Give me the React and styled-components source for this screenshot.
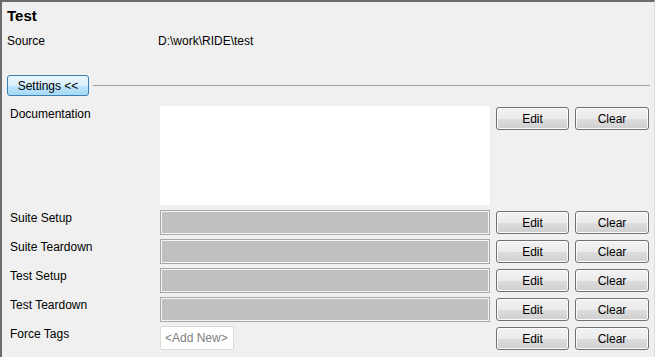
import React from "react";
import styled, { createGlobalStyle } from "styled-components";

const GlobalStyle = createGlobalStyle`
  html, body {
    margin: 0;
    padding: 0;
    background: #f0f0f0;
    font-family: "Liberation Sans", Arial, sans-serif;
    font-size: 12px;
    color: #000;
  }
`;

const Frame = styled.div`
  box-sizing: border-box;
  width: 655px;
  height: 357px;
  overflow: hidden;
  background: #f0f0f0;
  border-top: 2px solid #6b6b6b;
  border-left: 2px solid #6b6b6b;
  border-right: 1px solid #dcdcdc;
  display: flex;
  flex-direction: column;
`;

const Title = styled.div`
  font-weight: bold;
  font-size: 15px;
  line-height: 18px;
  padding: 5px 0 0 5px;
`;

const SourceRow = styled.div`
  display: grid;
  grid-template-columns: 151px 1fr;
  padding: 8px 0 0 5px;
  line-height: 16px;
`;

const SettingsBar = styled.div`
  display: flex;
  align-items: center;
  gap: 4px;
  padding: 26px 4px 0 5px;
`;

const SettingsButton = styled.button`
  box-sizing: border-box;
  height: 21px;
  width: 82px;
  padding: 0;
  font: inherit;
  color: #000;
  border: 1px solid #3c7fb1;
  border-radius: 3px;
  background: linear-gradient(#eaf6fd 0%, #d9f0fc 50%, #bee6fd 51%, #a7d9f5 100%);
`;

const Rule = styled.div`
  flex: 1;
  height: 1px;
  background: #a0a0a0;
`;

const Grid = styled.div`
  display: grid;
  grid-template-columns: 144px 330px 73px 74px;
  column-gap: 6px;
  padding: 10px 0 0 8px;
`;

const Label = styled.div`
  line-height: 16px;
  margin-right: -6px;
`;

const DocBox = styled.div`
  height: 99px;
  background: #fff;
  margin-bottom: 5px;
`;

const Field = styled.div`
  box-sizing: border-box;
  height: 25px;
  margin-bottom: 4px;
  background: #c0c0c0;
  border: 1px solid #a8a8a8;
  box-shadow: inset 0 0 0 1px #f4f4f4;
`;

const TagCell = styled.div`
  height: 25px;
`;

const AddNew = styled.div`
  box-sizing: border-box;
  display: inline-flex;
  align-items: center;
  height: 24px;
  padding: 0 5px 0 4px;
  background: #fff;
  border: 1px solid #dadada;
  border-radius: 2px;
  color: #808080;
`;

const Button = styled.button`
  box-sizing: border-box;
  height: 23px;
  margin-top: 1px;
  padding: 0;
  font: inherit;
  color: #000;
  border: 1px solid #707070;
  border-radius: 3px;
  background: linear-gradient(#f2f2f2 0%, #ebebeb 50%, #dddddd 51%, #cfcfcf 100%);
  box-shadow: inset 0 0 0 1px #fcfcfc;
  align-self: start;
`;

const rows = ["Suite Setup", "Suite Teardown", "Test Setup", "Test Teardown"];

export default function App() {
  return (
    <>
      <GlobalStyle />
      <Frame>
        <Title>Test</Title>
        <SourceRow>
          <span>Source</span>
          <span>D:\work\RIDE\test</span>
        </SourceRow>
        <SettingsBar>
          <SettingsButton>Settings &lt;&lt;</SettingsButton>
          <Rule />
        </SettingsBar>
        <Grid>
          <Label>Documentation</Label>
          <DocBox />
          <Button>Edit</Button>
          <Button>Clear</Button>
          {rows.map((name) => (
            <React.Fragment key={name}>
              <Label>{name}</Label>
              <Field />
              <Button>Edit</Button>
              <Button>Clear</Button>
            </React.Fragment>
          ))}
          <Label>Force Tags</Label>
          <TagCell>
            <AddNew>&lt;Add New&gt;</AddNew>
          </TagCell>
          <Button>Edit</Button>
          <Button>Clear</Button>
        </Grid>
      </Frame>
    </>
  );
}
